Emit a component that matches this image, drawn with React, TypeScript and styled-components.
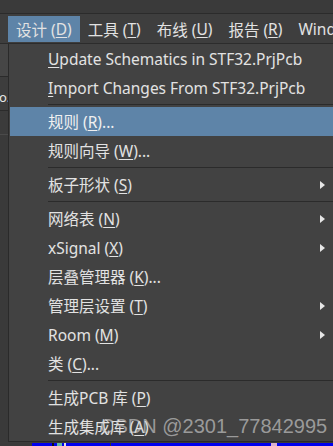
import React from "react";
import styled, { createGlobalStyle, css } from "styled-components";

const GlobalStyle = createGlobalStyle`
  html, body {
    margin: 0;
    padding: 0;
    background: #3b3b3b;
  }
  body {
    font-family: "Noto Sans", "Noto Sans CJK SC", sans-serif;
  }
`;

const Page = styled.div`
  position: relative;
  width: 333px;
  height: 446px;
  overflow: hidden;
  display: flex;
  flex-direction: column;
  background: #3b3b3b;
  color: #e2e2e2;
  font-size: 15.5px;
`;

const TopStrip = styled.div`
  flex-shrink: 0;
  height: 13px;
  background: #3a3a3a;
  border-bottom: 1px solid #2b2b2b;
`;

const MenuBar = styled.div`
  flex-shrink: 0;
  height: 27px;
  padding: 2px 0 0 8px;
  display: flex;
  align-items: flex-start;
  white-space: nowrap;
  background: #3e3e3e;
  border-bottom: 1px solid #2c2c2c;
`;

const BarItem = styled.div<{ $open?: boolean }>`
  height: 26px;
  padding: 0 8px;
  display: flex;
  align-items: center;
  ${(p) =>
    p.$open &&
    css`
      background: #5e84a8;
    `}
`;

const Key = styled.span`
  text-decoration: underline;
  text-underline-offset: 2px;
  text-decoration-thickness: 1px;
`;

const Body = styled.div`
  flex-shrink: 0;
  display: flex;
  height: 398px;
`;

const Dock = styled.div`
  width: 8px;
  flex-shrink: 0;
  display: flex;
  flex-direction: column;
  overflow: hidden;
`;

const DockPanel = styled.div<{ $h?: number; $bg: string; $line?: string }>`
  flex-shrink: 0;
  height: ${(p) => (p.$h ? `${p.$h}px` : "auto")};
  ${(p) => !p.$h && "flex: 1;"}
  background: ${(p) => p.$bg};
  border-bottom: 1px solid ${(p) => p.$line || "#2b2b2b"};
  display: flex;
  align-items: flex-end;
  font-size: 13px;
  line-height: 14px;
  color: #e8e8e8;
  white-space: nowrap;
`;

const DockText = styled.span`
  margin: 0 0 6px -1px;
`;

const Menu = styled.div`
  flex: 1;
  display: flex;
  flex-direction: column;
  background: #424242;
  border-left: 1px solid #2a2a2a;
  border-bottom: 1px solid #2a2a2a;
  padding-left: 1px;
  white-space: nowrap;
`;

const Item = styled.div<{ $active?: boolean }>`
  height: 29px;
  flex-shrink: 0;
  display: flex;
  align-items: center;
  padding: 0 8px 0 38px;
  ${(p) =>
    p.$active &&
    css`
      background: #5e84a8;
      color: #f0f0f0;
    `}
`;

const Arrow = styled.span`
  margin-left: auto;
  width: 0;
  height: 0;
  border-left: 5px solid #e6e6e6;
  border-top: 4.5px solid transparent;
  border-bottom: 4.5px solid transparent;
`;

const Separator = styled.div`
  height: 5px;
  flex-shrink: 0;
  display: flex;
  align-items: center;
  padding-left: 38px;
  &::before {
    content: "";
    flex: 1;
    height: 1px;
    background: #2b2b2b;
  }
`;

const BottomStrip = styled.div`
  flex: 1;
  display: flex;
  margin-top: 1px;
`;

const BottomLeft = styled.div`
  width: 32px;
  background: #3a3a3a;
`;

const Canvas = styled.div`
  flex: 1;
  display: flex;
  background: #0000ee;
`;

const Bit = styled.span<{ $w: number; $ml: number; $c: string }>`
  width: ${(p) => p.$w}px;
  margin-left: ${(p) => p.$ml}px;
  background: ${(p) => p.$c};
`;

const Watermark = styled.div`
  position: absolute;
  left: 100px;
  top: 414px;
  font-family: "Liberation Sans", Arial, sans-serif;
  font-size: 20px;
  line-height: 24px;
  color: rgba(215, 215, 215, 0.6);
  white-space: nowrap;
  pointer-events: none;
`;

type Entry =
  | { sep: true }
  | { label: string; k: string; tail?: string; pre?: boolean; sub?: boolean; active?: boolean };

const entries: Entry[] = [
  { label: "", k: "U", tail: "pdate Schematics in STF32.PrjPcb", pre: true },
  { label: "", k: "I", tail: "mport Changes From STF32.PrjPcb", pre: true },
  { sep: true },
  { label: "规则", k: "R", tail: "...", active: true },
  { label: "规则向导", k: "W", tail: "..." },
  { sep: true },
  { label: "板子形状", k: "S", sub: true },
  { sep: true },
  { label: "网络表", k: "N", sub: true },
  { label: "xSignal", k: "X", sub: true },
  { label: "层叠管理器", k: "K", tail: "..." },
  { label: "管理层设置", k: "T", sub: true },
  { label: "Room", k: "M", sub: true },
  { label: "类", k: "C", tail: "..." },
  { sep: true },
  { label: "生成PCB 库", k: "P" },
  { label: "生成集成库", k: "A" },
];

const bars = [
  { label: "设计", k: "D", open: true },
  { label: "工具", k: "T" },
  { label: "布线", k: "U" },
  { label: "报告", k: "R" },
];

export default function App() {
  return (
    <>
      <GlobalStyle />
      <Page>
        <TopStrip />
        <MenuBar>
          {bars.map((b) => (
            <BarItem key={b.label} $open={b.open}>
              {b.label}&nbsp;(<Key>{b.k}</Key>)
            </BarItem>
          ))}
          <BarItem>Window</BarItem>
        </MenuBar>
        <Body>
          <Dock>
            <DockPanel $h={32} $bg="#464646" />
            <DockPanel $h={33} $bg="#3d3d3d">
              <DockText>o.</DockText>
            </DockPanel>
            <DockPanel $h={23} $bg="#3b3b3b" $line="#4a4a4a" />
            <DockPanel $bg="#3a3a3a" $line="#3a3a3a" />
          </Dock>
          <Menu>
            {entries.map((e, i) =>
              "sep" in e ? (
                <Separator key={i} />
              ) : (
                <Item key={i} $active={e.active}>
                  {e.pre ? (
                    <>
                      <Key>{e.k}</Key>
                      {e.tail}
                    </>
                  ) : (
                    <>
                      {e.label}&nbsp;(<Key>{e.k}</Key>){e.tail}
                    </>
                  )}
                  {e.sub && <Arrow />}
                </Item>
              )
            )}
          </Menu>
        </Body>
        <BottomStrip>
          <BottomLeft />
          <Canvas>
            <Bit $w={2} $ml={20} $c="#111" />
            <Bit $w={5} $ml={3} $c="#5fb8a8" />
            <Bit $w={2} $ml={2} $c="#ddd" />
            <Bit $w={1} $ml={44} $c="#333" />
            <Bit $w={6} $ml={160} $c="#d8b0d0" />
          </Canvas>
        </BottomStrip>
        <Watermark>CSDN @2301_77842995</Watermark>
      </Page>
    </>
  );
}
